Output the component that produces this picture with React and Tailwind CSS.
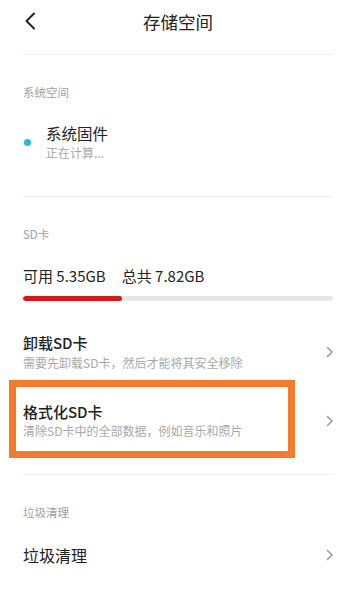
const Chevron = () => (
  <svg width="8" height="12" viewBox="0 0 8 12" className="shrink-0" aria-hidden>
    <path d="M1.5 1.5 L6 6 L1.5 10.5" fill="none" stroke="#9a9a9a" strokeWidth="1.6" strokeLinecap="round" strokeLinejoin="round" />
  </svg>
);

const Divider = ({ className = '' }) => <div className={`mx-[23px] h-px bg-[#f0f0f0] ${className}`} />;

const SectionLabel = ({ children, className = '' }) => (
  <div className={`px-[23px] text-[11.5px] leading-4 text-[#a0a0a0] ${className}`}>{children}</div>
);

const App = () => {
  const used = 32; // percent of bar shown red

  return (
    <div className="w-full min-h-[600px] bg-white overflow-hidden" style={{ fontFamily: '"Noto Sans CJK SC", "Noto Sans", sans-serif' }}>
      {/* Header */}
      <div className="relative h-11 flex items-center justify-center">
        <svg width="12" height="18" viewBox="0 0 12 18" className="absolute left-[24px] top-[12px]" aria-hidden>
          <path d="M10 1.5 L2.5 9 L10 16.5" fill="none" stroke="#222" strokeWidth="2" strokeLinecap="round" strokeLinejoin="round" />
        </svg>
        <div className="text-[17.5px] text-[#222] leading-6">存储空间</div>
      </div>
      <Divider className="mt-[10px]" />

      {/* System */}
      <SectionLabel className="mt-[29px]">系统空间</SectionLabel>
      <div className="mt-[23px] px-[23px] flex items-start">
        <div className="w-[23px] shrink-0">
          <div className="ml-[1px] mt-[16px] w-[7px] h-[7px] rounded-full bg-[#22b8e8]" />
        </div>
        <div>
          <div className="text-[15.5px] leading-5 text-[#222]">系统固件</div>
          <div className="mt-[2px] text-[12px] leading-4 text-[#a8a8a8]">正在计算...</div>
        </div>
      </div>
      <Divider className="mt-[35px]" />

      {/* SD card */}
      <SectionLabel className="mt-[29px]">SD卡</SectionLabel>
      <div className="mt-[23px] px-[23px] text-[15px] leading-[22px] text-[#222]">
        可用 5.35GB<span className="ml-[16px]">总共 7.82GB</span>
      </div>
      <div className="mt-[9px] mx-[23px] h-[5px] rounded-full bg-[#e6e6e6] overflow-hidden">
        <div className="h-full rounded-full bg-[#d5191f]" style={{ width: `${used}%` }} />
      </div>

      <div className="mt-[32px] px-[23px] flex items-center justify-between">
        <div>
          <div className="text-[15px] leading-5 font-medium text-[#222]">卸载SD卡</div>
          <div className="mt-[2px] text-[12px] leading-4 text-[#a8a8a8]">需要先卸载SD卡，然后才能将其安全移除</div>
        </div>
        <div className="mr-[-1px]"><Chevron /></div>
      </div>

      <div className="relative mt-[31px] px-[23px] flex items-center justify-between">
        <div className="absolute left-[9px] top-[-22px] w-[286px] h-[78px] border-[7px] border-[#f57b2c]" />
        <div>
          <div className="text-[15px] leading-5 font-medium text-[#222]">格式化SD卡</div>
          <div className="mt-[1px] text-[12px] leading-4 text-[#a8a8a8]">清除SD卡中的全部数据，例如音乐和照片</div>
        </div>
        <div className="mr-[-1px]"><Chevron /></div>
      </div>
      <Divider className="mt-[35px]" />

      {/* Cleanup */}
      <SectionLabel className="mt-[29px]">垃圾清理</SectionLabel>
      <div className="mt-[23px] px-[23px] flex items-center justify-between">
        <div className="text-[16px] leading-6 text-[#222]">垃圾清理</div>
        <div className="mr-[-1px]"><Chevron /></div>
      </div>
    </div>
  );
};

export default App;
